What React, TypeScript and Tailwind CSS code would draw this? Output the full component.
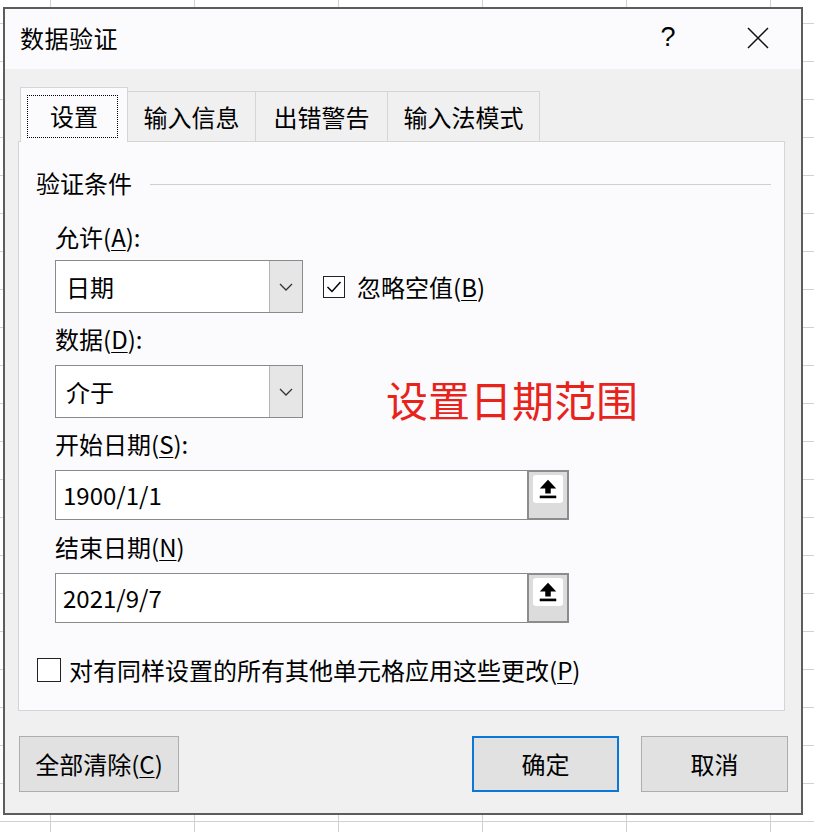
import React from "react";

const F = "font-['Noto_Sans_CJK_SC','Noto_Sans',sans-serif]";

function Chevron() {
  return (
    <svg width="14" height="8" viewBox="0 0 14 8" fill="none">
      <path d="M1 1 L7 7 L13 1" stroke="#333" strokeWidth="1.3" />
    </svg>
  );
}

function UpIcon() {
  return (
    <div className="w-[30px] h-[28px] bg-white rounded-[3px] flex items-center justify-center">
      <svg width="22" height="22" viewBox="0 0 20 20">
        <path d="M10 1.5 L2.5 9.5 H7.5 V14 H12.5 V9.5 H17.5 Z" fill="#000" />
        <rect x="2.5" y="16" width="15" height="2.4" fill="#000" />
      </svg>
    </div>
  );
}

function Select({ value }: { value: string }) {
  return (
    <div className="w-[248px] h-[53px] border border-[#8a8a8a] bg-white flex shrink-0">
      <div className="flex-1 flex items-center pl-[10px] text-[24px]">{value}</div>
      <div className="w-[33px] bg-[#e6e6e6] border-l border-[#b5b5b5] flex items-center justify-center">
        <Chevron />
      </div>
    </div>
  );
}

function DateInput({ value }: { value: string }) {
  return (
    <div className="w-[514px] h-[50px] border border-[#8a8a8a] bg-white flex">
      <div className="flex-1 flex items-center pl-[7px] text-[24px]">{value}</div>
      <div className="w-[42px] -my-px -mr-px bg-[#dcdcdc] border-2 border-[#8c8c8c] flex items-start justify-center pt-[3px]">
        <UpIcon />
      </div>
    </div>
  );
}

function Label({ children }: { children: React.ReactNode }) {
  return <div className="h-[30px] leading-[30px] text-[24px] ml-[36px]">{children}</div>;
}

function K({ children }: { children: React.ReactNode }) {
  return <span className="underline underline-offset-[3px] decoration-1">{children}</span>;
}

export default function App() {
  return (
    <div
      className={`w-[814px] h-[832px] overflow-hidden bg-white ${F} text-black pt-[7px] pl-[3px]
      bg-[linear-gradient(to_right,#d2d2d2_1px,transparent_1px),linear-gradient(to_bottom,#d2d2d2_1px,transparent_1px)]
      bg-size-[144px_38px] bg-position-[50px_23px]`}
    >
      <div className="w-[800px] h-[808px] border-2 border-[#5c5c5c] flex flex-col bg-[#f0f0f0]">
        {/* Title bar */}
        <div className="h-[60px] bg-[#fbfbfd] flex items-center pl-[15px] pr-[32px] shrink-0">
          <div className="text-[24px] tracking-[0.5px] flex-1 -mt-[3px]">数据验证</div>
          <div className="text-[27px] w-[24px] text-center mr-[67px] font-['Liberation_Sans',sans-serif] -mt-[3px]">?</div>
          <svg width="22" height="22" viewBox="0 0 22 22" className="-mt-[3px]">
            <path d="M1 1 L21 21 M21 1 L1 21" stroke="#111" strokeWidth="1.5" />
          </svg>
        </div>

        {/* Body */}
        <div className="flex-1 pl-[13px] pr-[16px]">
          {/* Tabs */}
          <div className="h-[72px] flex items-end">
            <div className="relative ml-[2px] w-[108px] h-[55px] bg-[#fbfbfd] border border-b-0 border-[#d5d5d5] -mb-px z-10 flex items-center justify-center text-[24px]">
              <div className="absolute left-[6px] right-[9px] top-[7px] bottom-[4px] border border-dotted border-black" />
              <span className="mt-[2px]">设置</span>
            </div>
            <div className="w-[128px] h-[50px] border border-b-0 border-l-0 border-[#d5d5d5] flex items-center justify-center text-[24px]">输入信息</div>
            <div className="w-[132px] h-[50px] border border-b-0 border-l-0 border-[#d5d5d5] flex items-center justify-center text-[24px]">出错警告</div>
            <div className="w-[152px] h-[50px] border border-b-0 border-l-0 border-[#d5d5d5] flex items-center justify-center text-[24px]">输入法模式</div>
          </div>

          {/* Panel */}
          <div className="h-[570px] bg-[#fbfbfd] border border-[#d5d5d5] flex flex-col">
            <div className="mt-[28px] h-[26px] flex items-center ml-[17px] mr-[13px]">
              <span className="text-[24px] leading-[26px]">验证条件</span>
              <div className="flex-1 h-px bg-[#cfcfcf] ml-[18px] mt-[2px]" />
            </div>

            <div className="mt-[26px]"><Label>允许(<K>A</K>):</Label></div>
            <div className="mt-[8px] ml-[36px] flex items-center">
              <Select value="日期" />
              <div className="ml-[20px] w-[22px] h-[22px] border-[1.5px] border-[#222] bg-white flex items-center justify-center">
                <svg width="16" height="14" viewBox="0 0 16 14" fill="none">
                  <path d="M1.5 7 L6 11.5 L14.5 2" stroke="#000" strokeWidth="1.5" />
                </svg>
              </div>
              <span className="ml-[12px] text-[24px]">忽略空值(<K>B</K>)</span>
            </div>

            <div className="mt-[11px]"><Label>数据(<K>D</K>):</Label></div>
            <div className="mt-[11px] ml-[36px] h-[53px] flex items-start">
              <Select value="介于" />
              <span className="ml-[83px] mt-[9px] text-[42px] leading-[50px] text-[#e8231c] whitespace-nowrap">设置日期范围</span>
            </div>

            <div className="mt-[11px]"><Label>开始日期(<K>S</K>):</Label></div>
            <div className="mt-[11px] ml-[36px]"><DateInput value="1900/1/1" /></div>

            <div className="mt-[12px]"><Label>结束日期(<K>N</K>)</Label></div>
            <div className="mt-[11px] ml-[36px]"><DateInput value="2021/9/7" /></div>

            <div className="mt-[29px] ml-[18px] flex items-center">
              <div className="w-[24px] h-[24px] border-[1.5px] border-[#222] bg-white" />
              <span className="ml-[8px] text-[24px]">对有同样设置的所有其他单元格应用这些更改(<K>P</K>)</span>
            </div>
          </div>

          {/* Buttons */}
          <div className="mt-[25px] flex items-center">
            <button className="ml-px w-[160px] h-[56px] bg-[#e1e1e1] border border-[#adadad] text-[24px]">全部清除(<K>C</K>)</button>
            <div className="flex-1" />
            <button className="w-[147px] h-[56px] bg-[#e1e1e1] border-2 border-[#0a78d7] text-[24px]">确定</button>
            <button className="ml-[22px] -mr-[3px] w-[147px] h-[56px] bg-[#e1e1e1] border border-[#adadad] text-[24px]">取消</button>
          </div>
        </div>
      </div>
    </div>
  );
}
